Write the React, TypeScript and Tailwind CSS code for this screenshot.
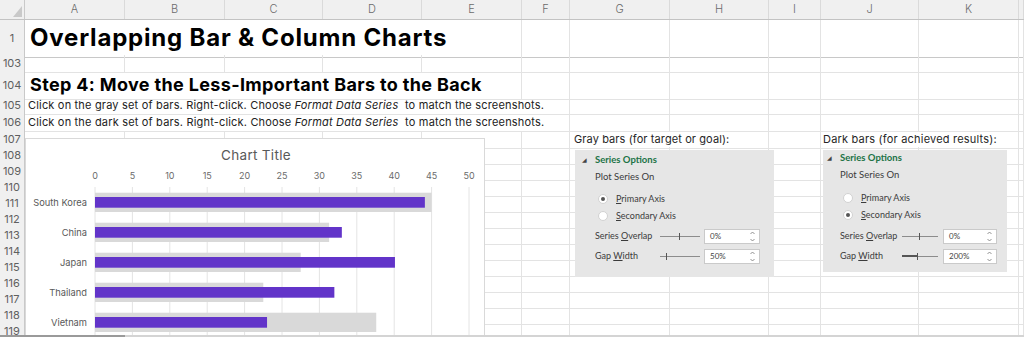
import type { ReactNode } from "react";

const COLS =
  "grid grid-cols-[25px_100px_100px_98px_99px_100px_48px_100px_99px_52px_98px_100px_1fr]";
const LETTERS = ["A", "B", "C", "D", "E", "F", "G", "H", "I", "J", "K", ""];

const SHEET_FONT = { fontFamily: "Inter, 'Noto Sans', sans-serif" };
const PANEL_FONT = { fontFamily: "Lato, 'Liberation Sans', sans-serif" };

const data = [
  { name: "South Korea", goal: 45, done: 44.1 },
  { name: "China", goal: 31.3, done: 33 },
  { name: "Japan", goal: 27.5, done: 40.1 },
  { name: "Thailand", goal: 22.5, done: 32 },
  { name: "Vietnam", goal: 37.6, done: 23 },
];
const ticks = [0, 5, 10, 15, 20, 25, 30, 35, 40, 45, 50];

function Blank({ n, line = "border-b-[#e3e3e3]" }: { n: number; line?: string }) {
  return (
    <>
      {Array.from({ length: n }).map((_, i) => (
        <div key={i} className={`border-r border-r-[#e3e3e3] border-b ${line}`} />
      ))}
    </>
  );
}

function Row({ num, h, children }: { num: string; h: string; children?: ReactNode }) {
  return (
    <div className={`${COLS} ${h}`}>
      <div className="flex items-center justify-center bg-[#f0f0f0] border-r border-r-[#c9c9c9] border-b border-b-[#dcdcdc] text-[11px] text-[#5f5f5f]">
        {num}
      </div>
      {children ?? <Blank n={12} />}
    </div>
  );
}

function ColumnHeader() {
  return (
    <div className={`${COLS} h-[20px] bg-[#f0f0f0] border-b border-[#c3c3c3]`}>
      <div className="flex items-end justify-end pr-[2px] pb-[2px] border-r border-[#c9c9c9]">
        <svg width="9" height="11" viewBox="0 0 9 11">
          <polygon points="9,0 9,11 0,11" fill="#c9c9c9" />
        </svg>
      </div>
      {LETTERS.map((l, i) => (
        <div
          key={i}
          className="flex items-center justify-center border-r border-[#dadada] text-[11px] text-[#6b6b6b] font-light"
        >
          {l}
        </div>
      ))}
    </div>
  );
}

function Chart() {
  const x0 = 69;
  const k = 7.48;
  return (
    <div className="absolute left-[25px] top-[138px] w-[460px] h-[200px] bg-white border border-[#d9d9d9]">
      <svg width="460" height="200" className="block" style={{ fontFamily: "Inter, sans-serif" }}>
        <text x="230" y="21" textAnchor="middle" fontSize="13.5" fill="#595959" letterSpacing="0.3">
          Chart Title
        </text>
        {ticks.map((v) => (
          <g key={v}>
            <text x={x0 + k * v} y="39.5" textAnchor="middle" fontSize="9" fill="#6b6b6b">
              {v}
            </text>
            <line x1={x0 + k * v} x2={x0 + k * v} y1="48" y2="200" stroke="#e4e4e4" strokeWidth="1" />
          </g>
        ))}
        {data.map((d, i) => (
          <g key={d.name}>
            <rect x={x0} y={53.7 + 30 * i} width={k * d.goal} height="19.3" fill="#d9d9d9" />
            <rect x={x0} y={58 + 30 * i} width={k * d.done} height="10.7" fill="#6234c9" />
            <text x="61" y={66.5 + 30 * i} textAnchor="end" fontSize="9.3" fill="#595959">
              {d.name}
            </text>
          </g>
        ))}
      </svg>
    </div>
  );
}

function Radio({ on }: { on: boolean }) {
  return (
    <span className="w-[10px] h-[10px] rounded-full bg-white border border-[#d2d2d2] flex items-center justify-center">
      {on && <span className="w-[4px] h-[4px] rounded-full bg-[#555]" />}
    </span>
  );
}

function Spinner() {
  return (
    <svg width="5" height="11" viewBox="0 0 5 11">
      <path d="M0.5 3 L2.5 1 L4.5 3" fill="none" stroke="#777" strokeWidth="0.8" />
      <path d="M0.5 8 L2.5 10 L4.5 8" fill="none" stroke="#777" strokeWidth="0.8" />
    </svg>
  );
}

function Slider({ w, tick, thick }: { w: string; tick: string; thick?: string }) {
  return (
    <div className={`relative shrink-0 h-[7px] flex items-center ${w}`}>
      <div className="h-[1px] w-full bg-[#8c8c8c]" />
      {thick && <div className={`absolute left-0 h-[2px] bg-[#555] ${thick}`} />}
      <span className={`absolute top-0 w-[1px] h-[7px] bg-[#555] ${tick}`} />
    </div>
  );
}

function Field({ w, value }: { w: string; value: string }) {
  return (
    <div
      className={`h-[15px] bg-white border border-[#cacaca] flex items-center justify-between pl-[5px] pr-[4px] text-[8px] text-[#444] ${w}`}
    >
      <span>{value}</span>
      <Spinner />
    </div>
  );
}

type PanelProps = {
  pos: string;
  pt: string;
  pl: string;
  radioGap: string;
  overlapGap: string;
  primary: boolean;
  labelW: string;
  sliderW: string;
  inputGap: string;
  inputW: string;
  overlapTick: string;
  gapTick: string;
  gapThick?: string;
  gapValue: string;
};

function Panel(p: PanelProps) {
  return (
    <div
      className={`absolute bg-[#e6e6e6] text-[9px] text-[#3b3b3b] flex flex-col ${p.pos} ${p.pt} ${p.pl}`}
      style={PANEL_FONT}
    >
      <div className="h-[14px] flex items-center">
        <span className="w-[6px] text-[6px] leading-none text-[#444]">◢</span>
        <span className="ml-[7px] text-[9.5px] font-bold text-[#217346]">Series Options</span>
      </div>
      <div className="h-[14px] mt-[3px] flex items-center pl-[13px] text-[9.5px]">Plot Series On</div>
      <div className={`h-[14px] flex items-center pl-[16px] ${p.radioGap}`}>
        <Radio on={p.primary} />
        <span className="ml-[8px]">
          <u>P</u>rimary Axis
        </span>
      </div>
      <div className="h-[14px] mt-[3px] flex items-center pl-[16px]">
        <Radio on={!p.primary} />
        <span className="ml-[8px]">
          <u>S</u>econdary Axis
        </span>
      </div>
      <div className={`h-[16px] flex items-center pl-[13px] ${p.overlapGap}`}>
        <span className={`shrink-0 whitespace-nowrap ${p.labelW}`}>
          Series <u>O</u>verlap
        </span>
        <Slider w={p.sliderW} tick={p.overlapTick} />
        <div className={p.inputGap}>
          <Field w={p.inputW} value="0%" />
        </div>
      </div>
      <div className="h-[16px] mt-[4px] flex items-center pl-[13px]">
        <span className={`shrink-0 whitespace-nowrap ${p.labelW}`}>
          Gap <u>W</u>idth
        </span>
        <Slider w={p.sliderW} tick={p.gapTick} thick={p.gapThick} />
        <div className={p.inputGap}>
          <Field w={p.inputW} value={p.gapValue} />
        </div>
      </div>
    </div>
  );
}

export default function App() {
  return (
    <div className="relative w-[1024px] h-[337px] overflow-hidden bg-white" style={SHEET_FONT}>
      <ColumnHeader />
      <Row num="1" h="h-[35px]">
        <div className="col-span-5 flex items-end pl-[5px] pb-[1px] border-r border-r-[#e3e3e3] border-b border-b-[#c8c8c8] text-[24px] font-bold tracking-[0.8px] text-black whitespace-nowrap">
          Overlapping Bar &amp; Column Charts
        </div>
        <Blank n={7} line="border-b-[#c8c8c8]" />
      </Row>
      <Row num="103" h="h-[16px]" />
      <Row num="104" h="h-[26px]">
        <div className="col-span-5 flex items-end pl-[5px] pb-[1px] border-r border-b border-[#e3e3e3] text-[18px] font-bold tracking-[0.35px] text-black whitespace-nowrap">
          Step 4: Move the Less-Important Bars to the Back
        </div>
        <Blank n={7} />
      </Row>
      <Row num="105" h="h-[17px]">
        <div className="col-span-6 flex items-center pl-[3px] border-r border-b border-[#e3e3e3] text-[11px] tracking-[0.18px] text-[#222] whitespace-nowrap">
          Click on the gray set of bars. Right-click. Choose&nbsp;<i>Format Data Series</i>&nbsp; to match the
          screenshots.
        </div>
        <Blank n={6} />
      </Row>
      <Row num="106" h="h-[17px]">
        <div className="col-span-6 flex items-center pl-[3px] border-r border-b border-[#e3e3e3] text-[11px] tracking-[0.18px] text-[#222] whitespace-nowrap">
          Click on the dark set of bars. Right-click. Choose&nbsp;<i>Format Data Series</i>&nbsp; to match the
          screenshots.
        </div>
        <Blank n={6} />
      </Row>
      <Row num="107" h="h-[16px]">
        <Blank n={6} />
        <div className="col-span-2 flex items-center pl-[4px] border-r border-b border-[#e3e3e3] text-[11px] tracking-[0.1px] text-[#262626] whitespace-nowrap">
          Gray bars (for target or goal):
        </div>
        <Blank n={1} />
        <div className="col-span-2 flex items-center pl-[2px] border-r border-b border-[#e3e3e3] text-[11px] tracking-[0.2px] text-[#262626] whitespace-nowrap">
          Dark bars (for achieved results):
        </div>
        <Blank n={1} />
      </Row>
      {["108", "109", "110", "111", "112", "113", "114", "115", "116", "117", "118", "119"].map((n) => (
        <Row key={n} num={n} h="h-[16px]" />
      ))}

      <Chart />

      <Panel
        pos="left-[575px] top-[150px] w-[199px] h-[127px]"
        pt="pt-[3px]"
        pl="pl-[7px]"
        radioGap="mt-[8px]"
        overlapGap="mt-[5px]"
        primary
        labelW="w-[65px]"
        sliderW="w-[40px]"
        inputGap="ml-[4px]"
        inputW="w-[56px]"
        overlapTick="left-[19px]"
        gapTick="left-[6px]"
        gapValue="50%"
      />
      <Panel
        pos="left-[823px] top-[150px] w-[184px] h-[122px]"
        pt="pt-[1px]"
        pl="pl-[4px]"
        radioGap="mt-[9px]"
        overlapGap="mt-[6px]"
        primary={false}
        labelW="w-[62px]"
        sliderW="w-[36px]"
        inputGap="ml-[5px]"
        inputW="w-[54px]"
        overlapTick="left-[17px]"
        gapTick="left-[15px]"
        gapThick="w-[15px]"
        gapValue="200%"
      />

      <div className="absolute left-0 bottom-0 w-full h-[2px] bg-[#d4d4d4]">
        <div className="w-[125px] h-full bg-[#9a9a9a]" />
      </div>
    </div>
  );
}
